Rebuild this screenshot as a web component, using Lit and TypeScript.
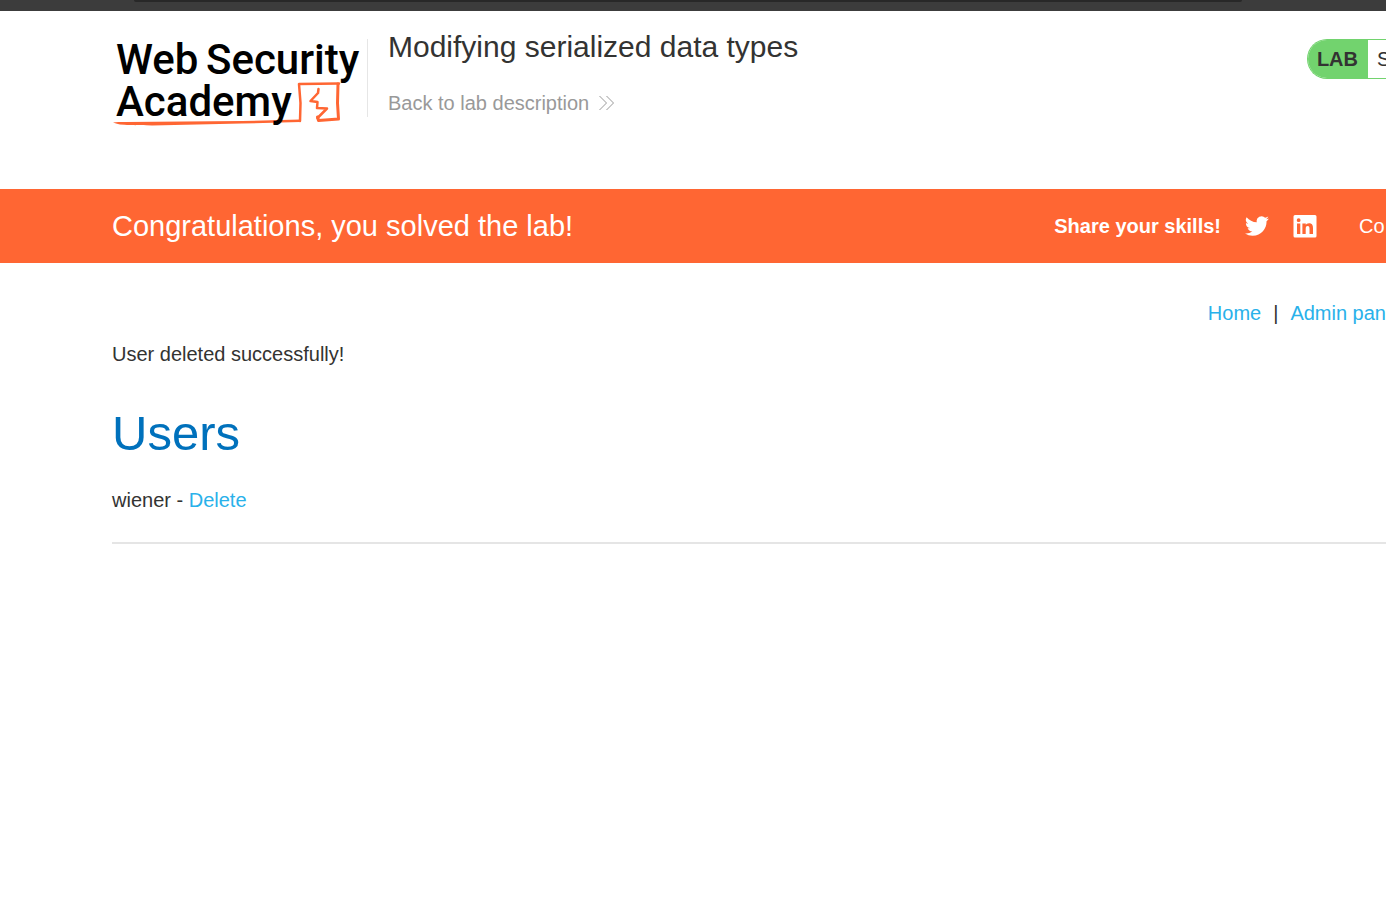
import { LitElement, html, css } from "lit";
import { customElement } from "lit/decorators.js";

@customElement("academy-logo")
class AcademyLogo extends LitElement {
  static styles = css`
    :host { display: block; }
    .link { display: block; }
    svg { display: block; overflow: visible; }
    .word { font-family: Roboto, "Liberation Sans", sans-serif; font-size: 42px; font-weight: 500; fill: #000; }
    .line { fill: none; stroke: #ff6633; stroke-linejoin: round; stroke-linecap: round; }
  `;
  render() {
    return html`<a class="link" href="#" aria-label="Web Security Academy">
      <svg width="256" height="88" viewBox="0 0 256 88">
        <path fill="#ff6633" d="M1 83.500 C4 82.500 8 83 14 83 L130 82 L188 80.500 V83 L130 84.500 L40 86.500 C25 86 8 87 1 83.500Z"/>
        <path class="line" stroke-width="2.500" d="M188 82 L188.500 64 L187 45 L227 44.500"/>
        <path class="line" stroke-width="3" d="M226 45 L225.500 64 L226.500 80 L206.500 81.500 L205.500 78"/>
        <path class="line" stroke-width="2.500" d="M206.500 50 L206 54 L198.500 62 L205.500 63 L205 69 L215 69.500 L205.500 79"/>
        <text class="word" x="4" y="35">Web</text>
        <text class="word" x="94" y="35">Security</text>
        <text class="word" x="4" y="77">Academy</text>
      </svg>
    </a>`;
  }
}

@customElement("app-root")
class AppRoot extends LitElement {
  static styles = css`
    :host {
      display: block;
      min-height: 100vh;
      background: #fff;
      color: #333332;
      font: 20px/24px "Liberation Sans", Arial, sans-serif;
      overflow-x: hidden;
    }
    a { color: #29b1ea; text-decoration: none; }
    h1, h2, p { margin: 0; font-weight: 400; }
    .browser { height: 11px; background: #3c3c3c; padding: 0 144px 0 134px; }
    .address { height: 2px; background: #282828; border-radius: 0 0 8px 8px; }
    .header { display: flex; align-items: flex-start; padding: 28px 0 62px 112px; }
    .title { flex: 1; margin-left: -1px; padding-left: 20px; border-left: 1px solid #e6e6e6; height: 78px; }
    .title h2 { font-size: 30px; line-height: 16px; margin-bottom: 36px; white-space: nowrap; }
    .back { display: inline-flex; align-items: center; gap: 10px; color: #999; }
    .back svg { stroke: #999; fill: none; }
    .status { display: flex; height: 38px; line-height: 38px; border: 1px solid #72d36e; border-right: 0; border-radius: 20px 0 0 20px; overflow: hidden; }
    .lab { background: #72d36e; padding: 0 10px 0 9px; font-weight: 700; }
    .state { padding-left: 9px; width: 9px; overflow: hidden; }
    .banner { display: flex; align-items: center; height: 74px; padding-left: 112px; background: #ff6633; color: #fff; }
    .banner h2 { flex: 1; font-size: 29px; line-height: 32px; }
    .share { display: flex; align-items: center; font-weight: 700; }
    .share a { display: block; }
    .share svg { display: block; fill: #fff; }
    .twitter { margin: 0 24px; }
    .banner .more { color: #fff; margin-left: 42px; width: 27px; }
    .content { padding: 38px 0 0 112px; }
    .nav { display: flex; justify-content: flex-end; gap: 12px; }
    .nav a { white-space: nowrap; }
    .message { padding-top: 17px; }
    .content h1 { color: #0071bc; font-size: 49px; line-height: 56px; margin: 39px 0 27px; }
    hr { border: 0; height: 2px; background: #e5e5e5; margin: 30px 0 0; }
  `;
  render() {
    return html`
      <div class="browser"><div class="address"></div></div>
      <header class="header">
        <academy-logo></academy-logo>
        <div class="title">
          <h2>Modifying serialized data types</h2>
          <a class="back" href="#">Back to lab description
            <svg width="16" height="16" viewBox="0 0 16 16"><path d="M.5 1 7.500 8 .5 15M7.500 1 14.500 8 7.500 15"/></svg>
          </a>
        </div>
        <div class="status"><span class="lab">LAB</span><span class="state">S</span></div>
      </header>
      <section class="banner">
        <h2>Congratulations, you solved the lab!</h2>
        <div class="share">
          <span>Share your skills!</span>
          <a class="twitter" href="#" aria-label="Twitter"><svg width="24" height="24" viewBox="0 0 24 24"><path d="M23.950 4.570a10 10 0 0 1-2.820.770 4.960 4.960 0 0 0 2.160-2.720c-.950.550-2 .960-3.130 1.180a4.920 4.920 0 0 0-8.380 4.480C7.690 8.100 4.070 6.130 1.640 3.160a4.920 4.920 0 0 0 1.520 6.570 4.900 4.900 0 0 1-2.230-.610v.060a4.920 4.920 0 0 0 3.950 4.830 5 5 0 0 1-2.210.080 4.940 4.940 0 0 0 4.600 3.420A9.870 9.870 0 0 1 0 19.540a13.990 13.990 0 0 0 7.550 2.210c9.050 0 14-7.500 14-13.980 0-.210 0-.420-.020-.630a9.940 9.940 0 0 0 2.420-2.570z"/></svg></a>
          <a href="#" aria-label="LinkedIn"><svg width="24" height="24" viewBox="0 0 24 24"><path fill-rule="evenodd" d="M2 1h20a1.500 1.500 0 0 1 1.500 1.500v19.500a1.500 1.500 0 0 1-1.500 1.500H2A1.500 1.500 0 0 1 .5 22V2.500A1.500 1.500 0 0 1 2 1zM4 9.500v10.500h3.300V9.500zM5.650 4.300a1.900 1.900 0 1 0 0 3.800 1.900 1.900 0 0 0 0-3.800zM9.400 9.500V20h3.300v-5.200c0-1.400.4-2.700 2-2.700s1.800 1.400 1.800 2.800V20H20v-5.800c0-2.800-.7-5-4-5-1.600 0-2.700.9-3.200 1.700V9.500z"/></svg></a>
        </div>
        <a class="more" href="#">Co</a>
      </section>
      <main class="content">
        <nav class="nav"><a href="#">Home</a><span>|</span><a href="#">Admin pan</a></nav>
        <p class="message">User deleted successfully!</p>
        <h1>Users</h1>
        <p>wiener - <a href="#">Delete</a></p>
        <hr />
      </main>
    `;
  }
}
